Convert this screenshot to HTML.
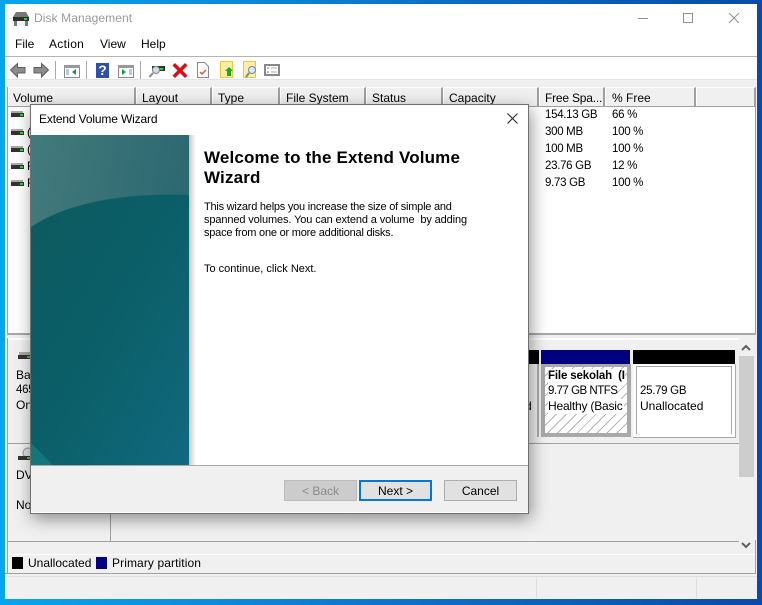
<!DOCTYPE html>
<html><head><meta charset="utf-8"><style>
html,body{margin:0;padding:0;width:762px;height:605px;overflow:hidden}
body{position:relative;font:12px "Liberation Sans",sans-serif;color:#000;background:linear-gradient(90deg,#06a6ec 0,#0a8fdc 25%,#0a6cc4 60%,#0a4aa8 100%)}
div,span.t{position:absolute}
.t{white-space:nowrap;line-height:15px}
.n{font-size:11.5px;letter-spacing:-.3px}
.h{top:87px;height:19px;background:#f0f0f0;border-right:2px solid #a0a0a0;border-left:1px solid #fff;border-top:1px solid #fff;box-sizing:border-box}
svg{position:absolute;overflow:visible}
</style></head><body>
<div style="left:5px;top:4px;width:752px;height:595px;background:#f0f0f0"></div>
<div style="left:5px;top:4px;width:752px;height:52px;background:#fff"></div>
<svg style="left:13px;top:11px" width="18" height="16"><path d="M3 1h10l3 5H0z" fill="#777"/><rect x="0" y="6" width="16" height="4" fill="#2e2e2e"/><rect x="11" y="7" width="3" height="2" fill="#3c3"/><path d="M1 10h3v5H1zM12 10h3v5h-3z" fill="#777"/><path d="M4 11h8v4H4z" fill="#f4f4f4"/></svg>
<span class="t" style="left:34px;top:11px;color:#9a9a9a;font-size:12px;letter-spacing:.1px">Disk Management</span>
<svg style="left:638px;top:12px" width="110" height="14" fill="none" stroke="#8f8f8f"><path d="M0 6.500h10"/><rect x="45.500" y="1.500" width="9" height="9"/><path d="M91 1l10 10M101 1l-10 10"/></svg>
<span class="t" style="left:15px;top:37px">File</span>
<span class="t" style="left:49px;top:37px;letter-spacing:.3px">Action</span>
<span class="t" style="left:100px;top:37px">View</span>
<span class="t" style="left:141px;top:37px">Help</span>
<div style="left:5px;top:56px;width:752px;height:1px;background:#b4b4b4"></div>
<div style="left:5px;top:57px;width:752px;height:22px;background:#fff"></div>
<div style="left:5px;top:79px;width:752px;height:8px;background:#f0f0f0;border-top:1px solid #e3e3e3;box-sizing:border-box"></div>
<svg style="left:0;top:55px" width="300" height="30">
<path d="M10.500 15l7-6.500v4h7.500v5.500h-7.500v4z" fill="#8c8c8c" stroke="#5f5f5f"/>
<path d="M48.500 15l-7-6.500v4h-7.500v5.500h7.500v4z" fill="#8c8c8c" stroke="#5f5f5f"/>
<path d="M55.500 6v18M86.500 6v18M140.500 6v18" stroke="#aaa"/>
<rect x="64.500" y="10.500" width="15" height="12" fill="#fff" stroke="#888"/><rect x="64" y="10" width="16" height="3" fill="#999"/><path d="M76 14v6l-4-3z" fill="#1a9a3a"/><path d="M66 15h3M66 17h3M66 19h3" stroke="#69c"/>
<rect x="96" y="8" width="13" height="15" fill="#2f4fb0"/><text x="102.500" y="20" text-anchor="middle" font-family="Liberation Sans" font-weight="700" font-size="14" fill="#fff">?</text>
<rect x="118.500" y="10.500" width="15" height="12" fill="#fff" stroke="#888"/><rect x="118" y="10" width="16" height="3" fill="#999"/><path d="M122 14v6l4-3z" fill="#1a9a3a"/><path d="M129 15h3M129 17h3M129 19h3" stroke="#69c"/>
<rect x="152" y="11" width="13" height="5" fill="#333"/><rect x="160" y="13" width="3" height="2" fill="#3c3"/><circle cx="156" cy="15" r="3.500" fill="#cde" stroke="#888"/><path d="M153 18l-3.500 4" stroke="#888" stroke-width="2"/>
<path d="M175 8l5 5 5-5 2.500 2.500-5 5 5 5-2.500 2.500-5-5-5 5-2.500-2.500 5-5-5-5z" fill="#d80f16"/>
<path d="M197.500 7.500h7l4 4v11h-11z" fill="#fff" stroke="#888"/><path d="M200 17l2 2 4-4" stroke="#e8582a" stroke-width="1.500" fill="none"/>
<rect x="220.500" y="6.500" width="12" height="16" fill="#fdeea6" stroke="#eec63f"/><path d="M229 12l-4 4h2v5h4v-5h2z" fill="#1da81d"/>
<rect x="243.500" y="6.500" width="12" height="16" fill="#fdeea6" stroke="#eec63f"/><circle cx="252" cy="15" r="3.500" fill="#dde9f3" stroke="#789"/><path d="M249 18l-3 4" stroke="#789" stroke-width="2"/>
<rect x="265" y="10" width="14" height="10" fill="#fff" stroke="#888" stroke-width="2"/><path d="M267 13h2M267 17h2" stroke="#37c"/><path d="M271 13h6M271 17h6" stroke="#aaa"/>
</svg>
<div style="left:7px;top:87px;width:749px;height:247px;background:#fff;border:1px solid #a0a0a0;border-bottom:0;box-sizing:border-box"></div>
<div class="h" style="left:8px;width:128px"></div><div class="h" style="left:136px;width:76px"></div><div class="h" style="left:212px;width:68px"></div><div class="h" style="left:280px;width:86px"></div><div class="h" style="left:366px;width:77px"></div><div class="h" style="left:443px;width:96px"></div><div class="h" style="left:539px;width:66px"></div><div class="h" style="left:605px;width:91px"></div><div class="h" style="left:696px;width:60px"></div>
<div style="left:8px;top:106px;width:748px;height:1px;background:#a0a0a0"></div>
<span class="t" style="left:13px;top:91px">Volume</span><span class="t" style="left:142px;top:91px">Layout</span><span class="t" style="left:218px;top:91px">Type</span><span class="t" style="left:286px;top:91px">File System</span><span class="t" style="left:372px;top:91px">Status</span><span class="t" style="left:449px;top:91px">Capacity</span><span class="t" style="left:545px;top:91px;letter-spacing:-.2px">Free Spa...</span><span class="t" style="left:612px;top:91px">% Free</span>
<span class="t n" style="left:545px;top:108px">154.13 GB</span><span class="t n" style="left:612px;top:108px">66 %</span>
<span class="t n" style="left:545px;top:125px">300 MB</span><span class="t n" style="left:612px;top:125px">100 %</span>
<span class="t n" style="left:545px;top:142px">100 MB</span><span class="t n" style="left:612px;top:142px">100 %</span>
<span class="t n" style="left:545px;top:159px">23.76 GB</span><span class="t n" style="left:612px;top:159px">12 %</span>
<span class="t n" style="left:545px;top:176px">9.73 GB</span><span class="t n" style="left:612px;top:176px">100 %</span>
<span class="t" style="left:27px;top:125px">(</span><span class="t" style="left:27px;top:142px">(</span><span class="t" style="left:27px;top:159px">F</span><span class="t" style="left:27px;top:176px">F</span>
<svg style="left:10px;top:110px" width="20" height="80"><g><rect x="1" y="1" width="12" height="2" fill="#aaa"/><rect x="1" y="3" width="13" height="4" fill="#333"/><rect x="10" y="4" width="3" height="2" fill="#3c3"/></g><g transform="translate(0,18)"><rect x="1" y="1" width="12" height="2" fill="#aaa"/><rect x="1" y="3" width="13" height="4" fill="#333"/><rect x="10" y="4" width="3" height="2" fill="#3c3"/></g><g transform="translate(0,35)"><rect x="1" y="1" width="12" height="2" fill="#aaa"/><rect x="1" y="3" width="13" height="4" fill="#333"/><rect x="10" y="4" width="3" height="2" fill="#3c3"/></g><g transform="translate(0,52)"><rect x="1" y="1" width="12" height="2" fill="#aaa"/><rect x="1" y="3" width="13" height="4" fill="#333"/><rect x="10" y="4" width="3" height="2" fill="#3c3"/></g><g transform="translate(0,69)"><rect x="1" y="1" width="12" height="2" fill="#aaa"/><rect x="1" y="3" width="13" height="4" fill="#333"/><rect x="10" y="4" width="3" height="2" fill="#3c3"/></g></svg>
<div style="left:7px;top:333px;width:749px;height:2px;background:#a8a8a8"></div>
<div style="left:7px;top:338px;width:1px;height:235px;background:#a0a0a0"></div>
<div style="left:8px;top:341px;width:731px;height:103px;background:#f0f0f0;border-bottom:1px solid #a0a0a0;box-sizing:border-box"></div>
<div style="left:8px;top:338px;width:731px;height:2px;background:#fff"></div>
<span class="t" style="left:16px;top:368px">Basic</span><span class="t n" style="left:16px;top:383px">465</span><span class="t" style="left:16px;top:398px">Online</span>
<span class="t" style="left:16px;top:468px">DVD</span><span class="t" style="left:16px;top:498px">No</span>
<svg style="left:18px;top:352px" width="14" height="8"><rect x="1" y="0" width="11" height="3" fill="#aaa"/><rect y="3" width="13" height="4" fill="#333"/><rect x="9" y="4" width="3" height="2" fill="#3c3"/></svg>
<svg style="left:18px;top:447px" width="16" height="14"><circle cx="10" cy="6" r="5" fill="#ddd" stroke="#999"/><rect y="9" width="13" height="4" fill="#333"/><rect x="9" y="10" width="3" height="2" fill="#3c3"/></svg>
<div style="left:110px;top:444px;width:1px;height:97px;background:#a0a0a0"></div>
<div style="left:8px;top:541px;width:732px;height:1px;background:#a0a0a0"></div>
<div style="left:528px;top:350px;width:11px;height:14px;background:#000"></div>
<div style="left:528px;top:364px;width:11px;height:73px;background:#f0f0f0;border-right:2px solid #aaa;box-sizing:border-box"></div>
<span class="t" style="left:525px;top:399px;width:6px;overflow:hidden">d</span>
<div style="left:541px;top:350px;width:89px;height:14px;background:#000080"></div>
<div style="left:541px;top:364px;width:90px;height:73px;background:#a9a9a9"></div>
<div style="left:545px;top:367px;width:82px;height:66px;background:repeating-linear-gradient(135deg,#fff 0 6px,#b4b4b4 6px 7px)"></div>
<span class="t" style="left:548px;top:369px;font-weight:700;font-size:11.5px;background:#fff;width:77px;overflow:hidden;letter-spacing:-.15px">File sekolah &nbsp;(I</span>
<span class="t" style="left:548px;top:384px;background:#fff;font-size:11.5px;letter-spacing:-.5px">9.77 GB NTFS</span>
<span class="t" style="left:548px;top:399px;background:#fff;width:76px;overflow:hidden;letter-spacing:-.2px">Healthy (Basic</span>
<div style="left:633px;top:350px;width:102px;height:14px;background:#000"></div>
<div style="left:633px;top:364px;width:103px;height:74px;background:#fff;border-right:1px solid #a8a8a8;border-bottom:1px solid #a8a8a8;box-sizing:border-box"></div>
<div style="left:636px;top:366px;width:96px;height:68px;border:1px solid #a8a8a8;border-bottom:0;box-sizing:border-box"></div>
<span class="t n" style="left:640px;top:384px">25.79 GB</span><span class="t" style="left:640px;top:399px">Unallocated</span>
<div style="left:739px;top:340px;width:17px;height:214px;background:#f0f0f0"></div>
<div style="left:739px;top:356px;width:15px;height:121px;background:#cdcdcd"></div>
<svg style="left:741px;top:343px" width="12" height="206" fill="none" stroke="#606060" stroke-width="2"><path d="M1 7l4-4 4 4M1 200l4 4 4-4"/></svg>
<div style="left:8px;top:554px;width:748px;height:1px;background:#fff"></div>
<div style="left:12px;top:557px;width:11px;height:12px;background:#000"></div><span class="t" style="left:28px;top:556px">Unallocated</span>
<div style="left:96px;top:557px;width:11px;height:12px;background:#000080"></div><span class="t" style="left:112px;top:556px;letter-spacing:.1px">Primary partition</span>
<div style="left:5px;top:573px;width:750px;height:1px;background:#a0a0a0"></div><div style="left:755px;top:540px;width:1px;height:34px;background:#a0a0a0"></div>
<div style="left:5px;top:576px;width:752px;height:1px;background:#e0e0e0"></div>
<div style="left:536px;top:578px;width:1px;height:20px;background:#ddd"></div>
<div style="left:696px;top:578px;width:1px;height:20px;background:#ddd"></div>

<div style="left:30px;top:104px;width:499px;height:410px;background:#fff;border:1px solid #707070;box-sizing:border-box;box-shadow:2px 5px 16px rgba(0,0,0,.42)"></div>
<span class="t" style="left:39px;top:112px;font-size:12px;letter-spacing:-.15px">Extend Volume Wizard</span>
<svg style="left:507px;top:113px" width="12" height="12" stroke="#222" fill="none"><path d="M.5.500l10 10M10.500.500l-10 10"/></svg>
<svg style="left:31px;top:135px" width="165" height="330"><defs><linearGradient id="g" x1="0" y1="0" x2="1" y2=".4"><stop offset="0" stop-color="#437a7c"/><stop offset="1" stop-color="#2a6670"/></linearGradient><linearGradient id="h" x1="0" y1="0" x2="1" y2="1"><stop offset="0" stop-color="#0c5a5f"/><stop offset=".5" stop-color="#0b5f68"/><stop offset="1" stop-color="#11697e"/></linearGradient><linearGradient id="s" x1="0" x2="1"><stop offset="0" stop-color="#c8c8c8"/><stop offset="1" stop-color="#fff"/></linearGradient></defs>
<rect width="158" height="330" fill="url(#g)"/><path d="M0 92C40 65 100 58 158 60V330H0z" fill="url(#h)"/><path d="M0 308L22 330H0z" fill="#14757c"/><rect x="158" width="7" height="330" fill="url(#s)"/></svg>
<span class="t" style="left:204px;top:148px;font-size:17px;font-weight:700;line-height:20px;letter-spacing:.16px">Welcome to the Extend Volume<br>Wizard</span>
<span class="t" style="left:204px;top:201px;font-size:11px;line-height:13px;letter-spacing:-.12px"><span style="letter-spacing:-.23px">This wizard helps you increase the size of simple and</span><br>spanned volumes. You can extend a volume &nbsp;by adding<br><span style="letter-spacing:-.22px">space from one or more additional disks.</span></span>
<span class="t" style="left:204px;top:262px;font-size:11px">To continue, click Next.</span>
<div style="left:31px;top:465px;width:497px;height:1px;background:#a8a8a8"></div>
<div style="left:31px;top:466px;width:497px;height:46px;background:#f0f0f0"></div>
<div style="left:284px;top:480px;width:73px;height:21px;background:#cccccc;border:1px solid #bbb;box-sizing:border-box;text-align:center;line-height:20px;color:#8c8c8c">&lt; Back</div>
<div style="left:359px;top:480px;width:73px;height:21px;background:#e1e1e1;border:2px solid #0078d7;box-sizing:border-box;text-align:center;line-height:18px">Next &gt;</div>
<div style="left:444px;top:480px;width:73px;height:21px;background:#e1e1e1;border:1px solid #adadad;box-sizing:border-box;text-align:center;line-height:20px">Cancel</div>
</body></html>
